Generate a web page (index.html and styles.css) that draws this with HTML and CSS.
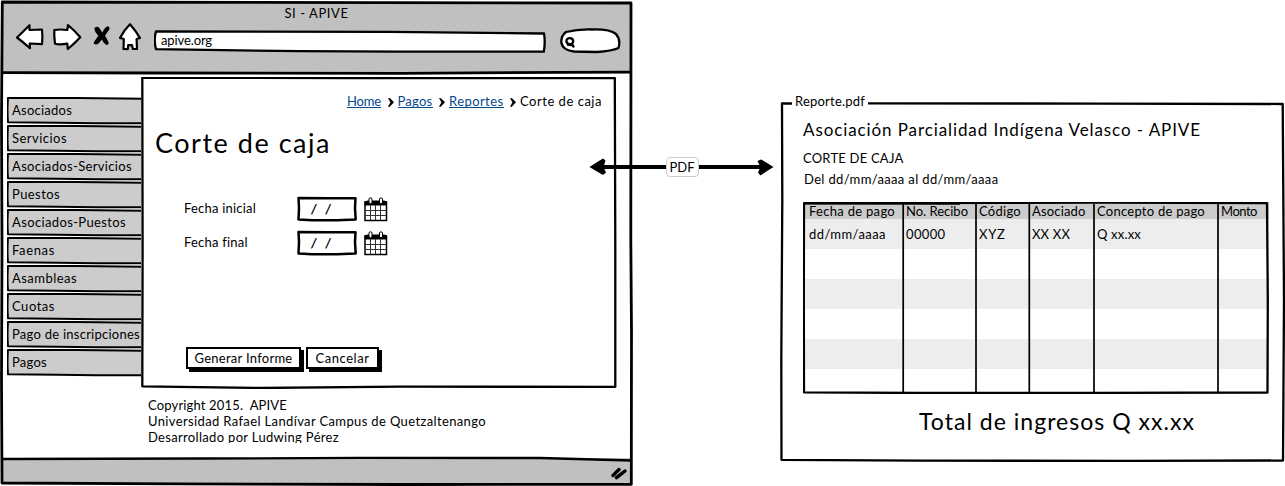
FILE: index.html
```html
<!DOCTYPE html>
<html lang="es">
<head>
<meta charset="utf-8">
<title>SI - APIVE</title>
<link rel="stylesheet" href="styles.css">
</head>
<body>
<main class="board">
  <section class="browser">
    <header class="chrome">
      <div class="window-title"><span data-w="64">SI - APIVE</span></div>
      <div class="toolbar">
        <svg class="nav-icons" width="130" height="30" viewBox="14 22 130 30">
          <g class="outline">
            <path d="M17 37.500 29.500 25.200 29.500 30 42 29.500Q42.800 37 42 44.200L29.700 43.500 30 48.200Q23 42 17 37.500Z"/>
            <path d="M54.300 30Q60 29 67.300 30L68 25Q75 31 80.300 37.200Q75 43 67.800 49L67.300 43.600Q60 45 55 43.800Q54 36 54.300 30Z"/>
            <path d="M130 24.200Q136 31 140 38L136.600 39 137 49 132.800 48.800 132 45.200 128.200 45.200 127.800 49.200 123.500 49 123.800 39 120 38Q124 30 130 24.200Z"/>
          </g>
          <path class="solid" d="M94.500 28Q98 25 100 29L102.500 32.500Q105 26.500 108 26.300Q110.500 27.500 109 30L105 35.500 108.500 42Q109 45 106.500 45Q104 44 101.800 39.500Q98.500 44.500 96 44.500Q93 44 94 42L98.300 35.700Q94 31 94.500 28Z"/>
        </svg>
        <div class="address">
          <svg class="ink" viewBox="154 30 392 24"><path class="paper line2" d="M156 31.500 L390 31.800 544 33.500Q545.500 42 543.800 51.700L400 51.600 300 51.200 156 49.200Q153.500 40 156 31.500Z"/></svg>
          <span data-w="51">apive.org</span>
        </div>
        <svg class="search" width="62" height="26" viewBox="560 28 62 26">
          <path class="paper line2" d="M566 32Q578 29 592 29.500Q610 29 616 34Q621 40 618.500 48Q612 51 597 52Q583 51.500 574 51.500Q562 50 561.300 42Q561 36 566 32Z"/>
          <path class="line2 open" d="M569.500 38.200C574 38 574.500 43.500 570.500 44C565.500 44.500 565 38.500 569.500 38.200M571.500 43.500 574 47.300M567 44.500 572 45"/>
        </svg>
      </div>
    </header>
    <div class="page">
      <nav class="menu">
        <a><svg class="ink" viewBox="0 0 136 28"><use href="#tab"/></svg><span data-w="60">Asociados</span></a>
        <a><svg class="ink" viewBox="0 0 136 28"><use href="#tab"/></svg><span data-w="55">Servicios</span></a>
        <a><svg class="ink" viewBox="0 0 136 28"><use href="#tab"/></svg><span data-w="120">Asociados-Servicios</span></a>
        <a><svg class="ink" viewBox="0 0 136 28"><use href="#tab"/></svg><span data-w="48">Puestos</span></a>
        <a><svg class="ink" viewBox="0 0 136 28"><use href="#tab"/></svg><span data-w="114">Asociados-Puestos</span></a>
        <a><svg class="ink" viewBox="0 0 136 28"><use href="#tab"/></svg><span data-w="43">Faenas</span></a>
        <a><svg class="ink" viewBox="0 0 136 28"><use href="#tab"/></svg><span data-w="65">Asambleas</span></a>
        <a><svg class="ink" viewBox="0 0 136 28"><use href="#tab"/></svg><span data-w="43">Cuotas</span></a>
        <a><svg class="ink" viewBox="0 0 136 28"><use href="#tab"/></svg><span data-w="128">Pago de inscripciones</span></a>
        <a><svg class="ink" viewBox="0 0 136 28"><use href="#tab"/></svg><span data-w="35">Pagos</span></a>
      </nav>
      <div class="column">
        <section class="panel">
          <svg class="ink" viewBox="141 77 476 312"><path class="line2" d="M142.300 77.700 L350 78.200 614.800 78 615.300 250 615.300 386.800 400 386.700 260 388 142.300 386.300 142.600 250Z"/></svg>
          <div class="crumbs">
            <a data-w="34">Home</a>
            <svg width="6" height="9" viewBox="0 0 6 9"><use href="#chev"/></svg>
            <a data-w="35">Pagos</a>
            <svg width="6" height="9" viewBox="0 0 6 9"><use href="#chev"/></svg>
            <a data-w="54.500">Reportes</a>
            <svg width="6" height="9" viewBox="0 0 6 9"><use href="#chev"/></svg>
            <span data-w="82">Corte de caja</span>
          </div>
          <h1><span data-w="176">Corte de caja</span></h1>
          <div class="form">
            <div class="field">
              <label><span data-w="72">Fecha inicial</span></label>
              <div class="date"><svg class="ink" viewBox="0 0 60 26"><use href="#box"/></svg><span>/&nbsp; /</span></div>
              <svg class="calendar" width="24" height="25" viewBox="0 0 24 25"><use href="#cal"/></svg>
            </div>
            <div class="field">
              <label><span data-w="63.500">Fecha final</span></label>
              <div class="date"><svg class="ink" viewBox="0 0 60 26"><use href="#box"/></svg><span>/&nbsp; /</span></div>
              <svg class="calendar" width="24" height="25" viewBox="0 0 24 25"><use href="#cal"/></svg>
            </div>
          </div>
          <div class="actions">
            <button class="generate"><span data-w="98">Generar Informe</span></button>
            <button class="cancel"><span data-w="54">Cancelar</span></button>
          </div>
        </section>
        <footer class="credits">
          <div><span data-w="139">Copyright 2015.&nbsp; APIVE</span></div>
          <div><span data-w="338">Universidad Rafael Landívar Campus de Quetzaltenango</span></div>
          <div><span data-w="191">Desarrollado por Ludwing Pérez</span></div>
        </footer>
      </div>
    </div>
    <div class="status"></div>
    <svg class="ink" viewBox="0 0 634 486">
      <path class="shade" d="M2 459 L200 458 420 457.800 560 458.300 631 460.500 631 484 2 483Z"/>
      <path class="line3" d="M2.300 2 L631 3 630.800 240 631.500 330 631.300 484.300 400 484.500 180 483.800 2 483 1.500 380 2 250 1.500 120Z"/>
      <path class="line3" d="M2 72.600 L160 73 400 73.300 560 72.400 631 72.200"/>
      <path class="line2" d="M2 459 L200 458.500 360 457.900 540 458 631 460.500"/>
      <path class="grip" d="M613 475.500 619 469.500M616.500 477.700 625 471"/>
    </svg>
  </section>

  <div class="connector">
    <svg class="ink" viewBox="589 156 186 22">
      <path class="line4" d="M600 167H763"/>
      <path class="solid" d="M589.500 167Q597 162 603 158.500L605.500 160.500 603.500 167 606 172.500 603 175Q596 171 589.500 167ZM773.500 167Q767 163 761 159.500L757.500 161 760.500 167 758 172.500 760.500 175.500Q767 171 773.500 167Z"/>
    </svg>
    <span class="tag"><span data-w="25">PDF</span></span>
  </div>

  <section class="report">
    <svg class="ink" viewBox="780 101 505 361">
      <path class="line2" d="M792 103.500H782L782.300 200 781.300 360 781.500 459.800 920 460.700 1130 460.800 1283 460.500 1284 300 1282.700 104 1100 103.600 868 103.300"/>
    </svg>
    <div class="legend"><span data-w="70">Reporte.pdf</span></div>
    <h2><span data-w="398">Asociación Parcialidad Indígena Velasco - APIVE</span></h2>
    <p class="subtitle"><span data-w="100.500">CORTE DE CAJA</span></p>
    <p class="range"><span data-w="194.500">Del dd/mm/aaaa al dd/mm/aaaa</span></p>
    <div class="table">
      <div class="row head"><span data-w="86">Fecha de pago</span><span data-w="62">No. Recibo</span><span data-w="42">Código</span><span data-w="53.500">Asociado</span><span data-w="108">Concepto de pago</span><span data-w="36">Monto</span></div>
      <div class="row tint"><span data-w="77">dd/mm/aaaa</span><span data-w="39.500">00000</span><span data-w="26.500">XYZ</span><span data-w="38">XX XX</span><span data-w="44">Q xx.xx</span><span></span></div>
      <div class="row"></div>
      <div class="row tint"></div>
      <div class="row"></div>
      <div class="row tint"></div>
      <svg class="ink" viewBox="803 202 466 192">
        <path class="line3" d="M804 203 L960 203.300"/>
        <path class="line2" d="M804 203.200 L1100 202.700 1267 203.200 1267.800 300 1267.500 392.500 1100 392.800 920 393 804 392.300 803.800 300Z"/>
        <path class="rule" d="M903.200 204V392M976 204V392M1029.300 204V392M1094 204V392M1218 204V393"/>
      </svg>
    </div>
    <div class="total"><span data-w="276">Total de ingresos Q xx.xx</span></div>
  </section>
</main>

<svg class="symbols" width="0" height="0">
  <symbol id="tab" viewBox="0 0 136 28">
    <path fill="#ccc" d="M.5 1.500H136V26H.5Z"/>
    <path class="tabline" d="M136 1.700 L70 1 1 .9Q.1 14 1 25.300L50 25.700 90 26.300 136 26.200"/>
  </symbol>
  <symbol id="chev" viewBox="0 0 6 9"><path d="M0 0 2 .3 6 4.300 1.500 9 0 8.500 2.400 4.500Z"/></symbol>
  <symbol id="box" viewBox="0 0 60 26"><path fill="#fff" stroke="#000" stroke-width="2.500" stroke-linejoin="round" d="M1.500 2 L30 2.300 58.500 2.200 58 12 58.700 23.500 40 24.300 15 24.300 1.500 23.500 2 12Z"/></symbol>
  <symbol id="cal" viewBox="0 0 24 25">
    <path fill="#fff" stroke="#000" stroke-width="1.500" d="M1 5H22.500V23.500H1Z"/>
    <path d="M.5 4.500 3.500 3.500H20L23 4.500V8.500H.5Z"/>
    <path stroke="#333" stroke-width="1" d="M1 13.500H22M1 18.500H22M6.500 8V23M11.500 8V23M16.500 8V23"/>
    <path fill="#fff" stroke="#000" stroke-width="1" d="M5 1.500Q6.500 0 8 1.500V6Q6.500 7.500 5 6ZM15.500 1.500Q17 0 18.500 1.500V6Q17 7.500 15.500 6Z"/>
  </symbol>
</svg>
<script src="fit.js"></script>
</body>
</html>
```
FILE: styles.css
```css
* { box-sizing: border-box; }
body {
  margin: 0;
  background: #fff;
  color: #000;
  font: 13px/16px Lato, "Noto Sans", sans-serif;
  overflow: hidden;
}
h1, h2, p { margin: 0; font-weight: 400; }
span, a { white-space: nowrap; }
svg { display: block; flex: none; }
[data-w] { display: inline-block; }

.board {
  position: relative;
  display: flex;
  justify-content: space-between;
  width: 1285px;
  height: 486px;
}
.ink {
  position: absolute;
  inset: 0;
  width: 100%;
  height: 100%;
  pointer-events: none;
}
.symbols { position: absolute; }
.line2, .line3, .line4, .rule, .tabline { fill: none; stroke: #000; stroke-linejoin: round; }
.line2 { stroke-width: 2.3; }
.line3 { stroke-width: 2.8; }
.line4 { stroke-width: 3.8; }
.rule { stroke-width: 1.7; }
.tabline { stroke-width: 1.9; }
.line2.paper { fill: #fff; }
.solid { fill: #000; }
.shade { fill: #c0c0c0; }
.grip { stroke: #000; stroke-width: 3.5; stroke-linecap: round; }

/* browser window */
.browser {
  position: relative;
  display: flex;
  flex-direction: column;
  width: 634px;
  height: 486px;
  padding: 2px 3px 2px 2px;
}
.chrome { height: 71px; background: #c0c0c0; }
.window-title { padding-top: 3px; text-align: center; }
.toolbar { display: flex; align-items: flex-start; padding: 1px 0 0 12px; }
.outline { fill: #fff; stroke: #000; stroke-width: 2.2; stroke-linejoin: round; }
.address {
  position: relative;
  width: 392px;
  height: 24px;
  margin: 8px 14px 0 10px;
  padding: 2px 7px;
}
.address span { position: relative; }
.search { margin-top: 6px; }
.page { display: flex; flex: 1; padding: 4px 0 0 5px; }
.menu { width: 134px; padding-top: 20px; }
.menu a {
  position: relative;
  display: block;
  width: 136px;
  height: 28px;
  padding: 5px 0 0 5px;
}
.menu span { position: relative; }
.column { width: 476px; }
.panel {
  position: relative;
  height: 312px;
  padding: 16px 0 0 14px;
  background: #fff;
}
.crumbs {
  position: relative;
  display: flex;
  justify-content: flex-end;
  align-items: flex-start;
  padding-right: 15px;
}
.crumbs a { height: 15px; color: #04498d; border-bottom: 1px solid #04498d; }
.crumbs svg { margin: 5px 4px 0 6.5px; }
h1 { padding-top: 18px; font-size: 27px; line-height: 32px; }
.form { padding: 37px 0 0 29px; }
.field { display: flex; height: 34px; }
.field label { width: 113px; padding-top: 4px; }
.date { position: relative; width: 60px; height: 26px; padding: 5px 0 0 14px; }
.date span { position: relative; font-style: italic; font-weight: 700; letter-spacing: 1px; }
.calendar { margin: 1px 0 0 7px; }
.actions { display: flex; gap: 5px; padding: 83px 0 0 31px; }
button {
  height: 22px;
  margin: 0;
  padding: 0;
  border: 2px solid #000;
  background: #fff;
  box-shadow: 3px 3px 0 #000;
  color: #000;
  font: inherit;
}
.generate { width: 115px; }
.cancel { width: 73px; }
.credits { height: 46px; margin: 8px 0 0 7px; overflow: hidden; }
.status { height: 26px; background: #c0c0c0; }

/* arrow between both screens */
.connector {
  position: absolute;
  left: 589px;
  top: 156px;
  display: flex;
  justify-content: center;
  width: 186px;
  height: 22px;
}
.tag {
  position: relative;
  width: 33px;
  height: 20px;
  margin-top: 1px;
  padding-top: 1px;
  border: 1px solid #ccc;
  border-radius: 4px;
  background: #fff;
  text-align: center;
}

/* report */
.report {
  position: relative;
  width: 505px;
  height: 361px;
  margin-top: 101px;
  padding-left: 23px;
}
.legend { margin: -8px 0 0 -8px; }
h2 { padding-top: 11px; font-size: 17px; line-height: 20px; }
.subtitle { padding-top: 10px; }
.range { padding: 5px 0 0 1px; }
.table { position: relative; width: 466px; height: 192px; margin-top: 15px; }
.row {
  display: grid;
  grid-template-columns: 97px 73px 53px 65px 124px 1fr;
  height: 30px;
  padding: 7px 0 0 6px;
}
.row.head { height: 17px; padding-top: 1px; background: #ccc; }
.row > span { justify-self: start; }
.tint { background: #ededed; }
.total { padding: 13px 0 0 116px; font-size: 23px; line-height: 28px; }
```
FILE: fit.js
```js
// Track each label so that it fills its measured width.
document.querySelectorAll("[data-w]").forEach(function (el) {
  var extra = Number(el.dataset.w) - el.getBoundingClientRect().width;
  var gap = extra / el.textContent.length;
  el.style.letterSpacing = gap.toFixed(3) + "px";
});
```
